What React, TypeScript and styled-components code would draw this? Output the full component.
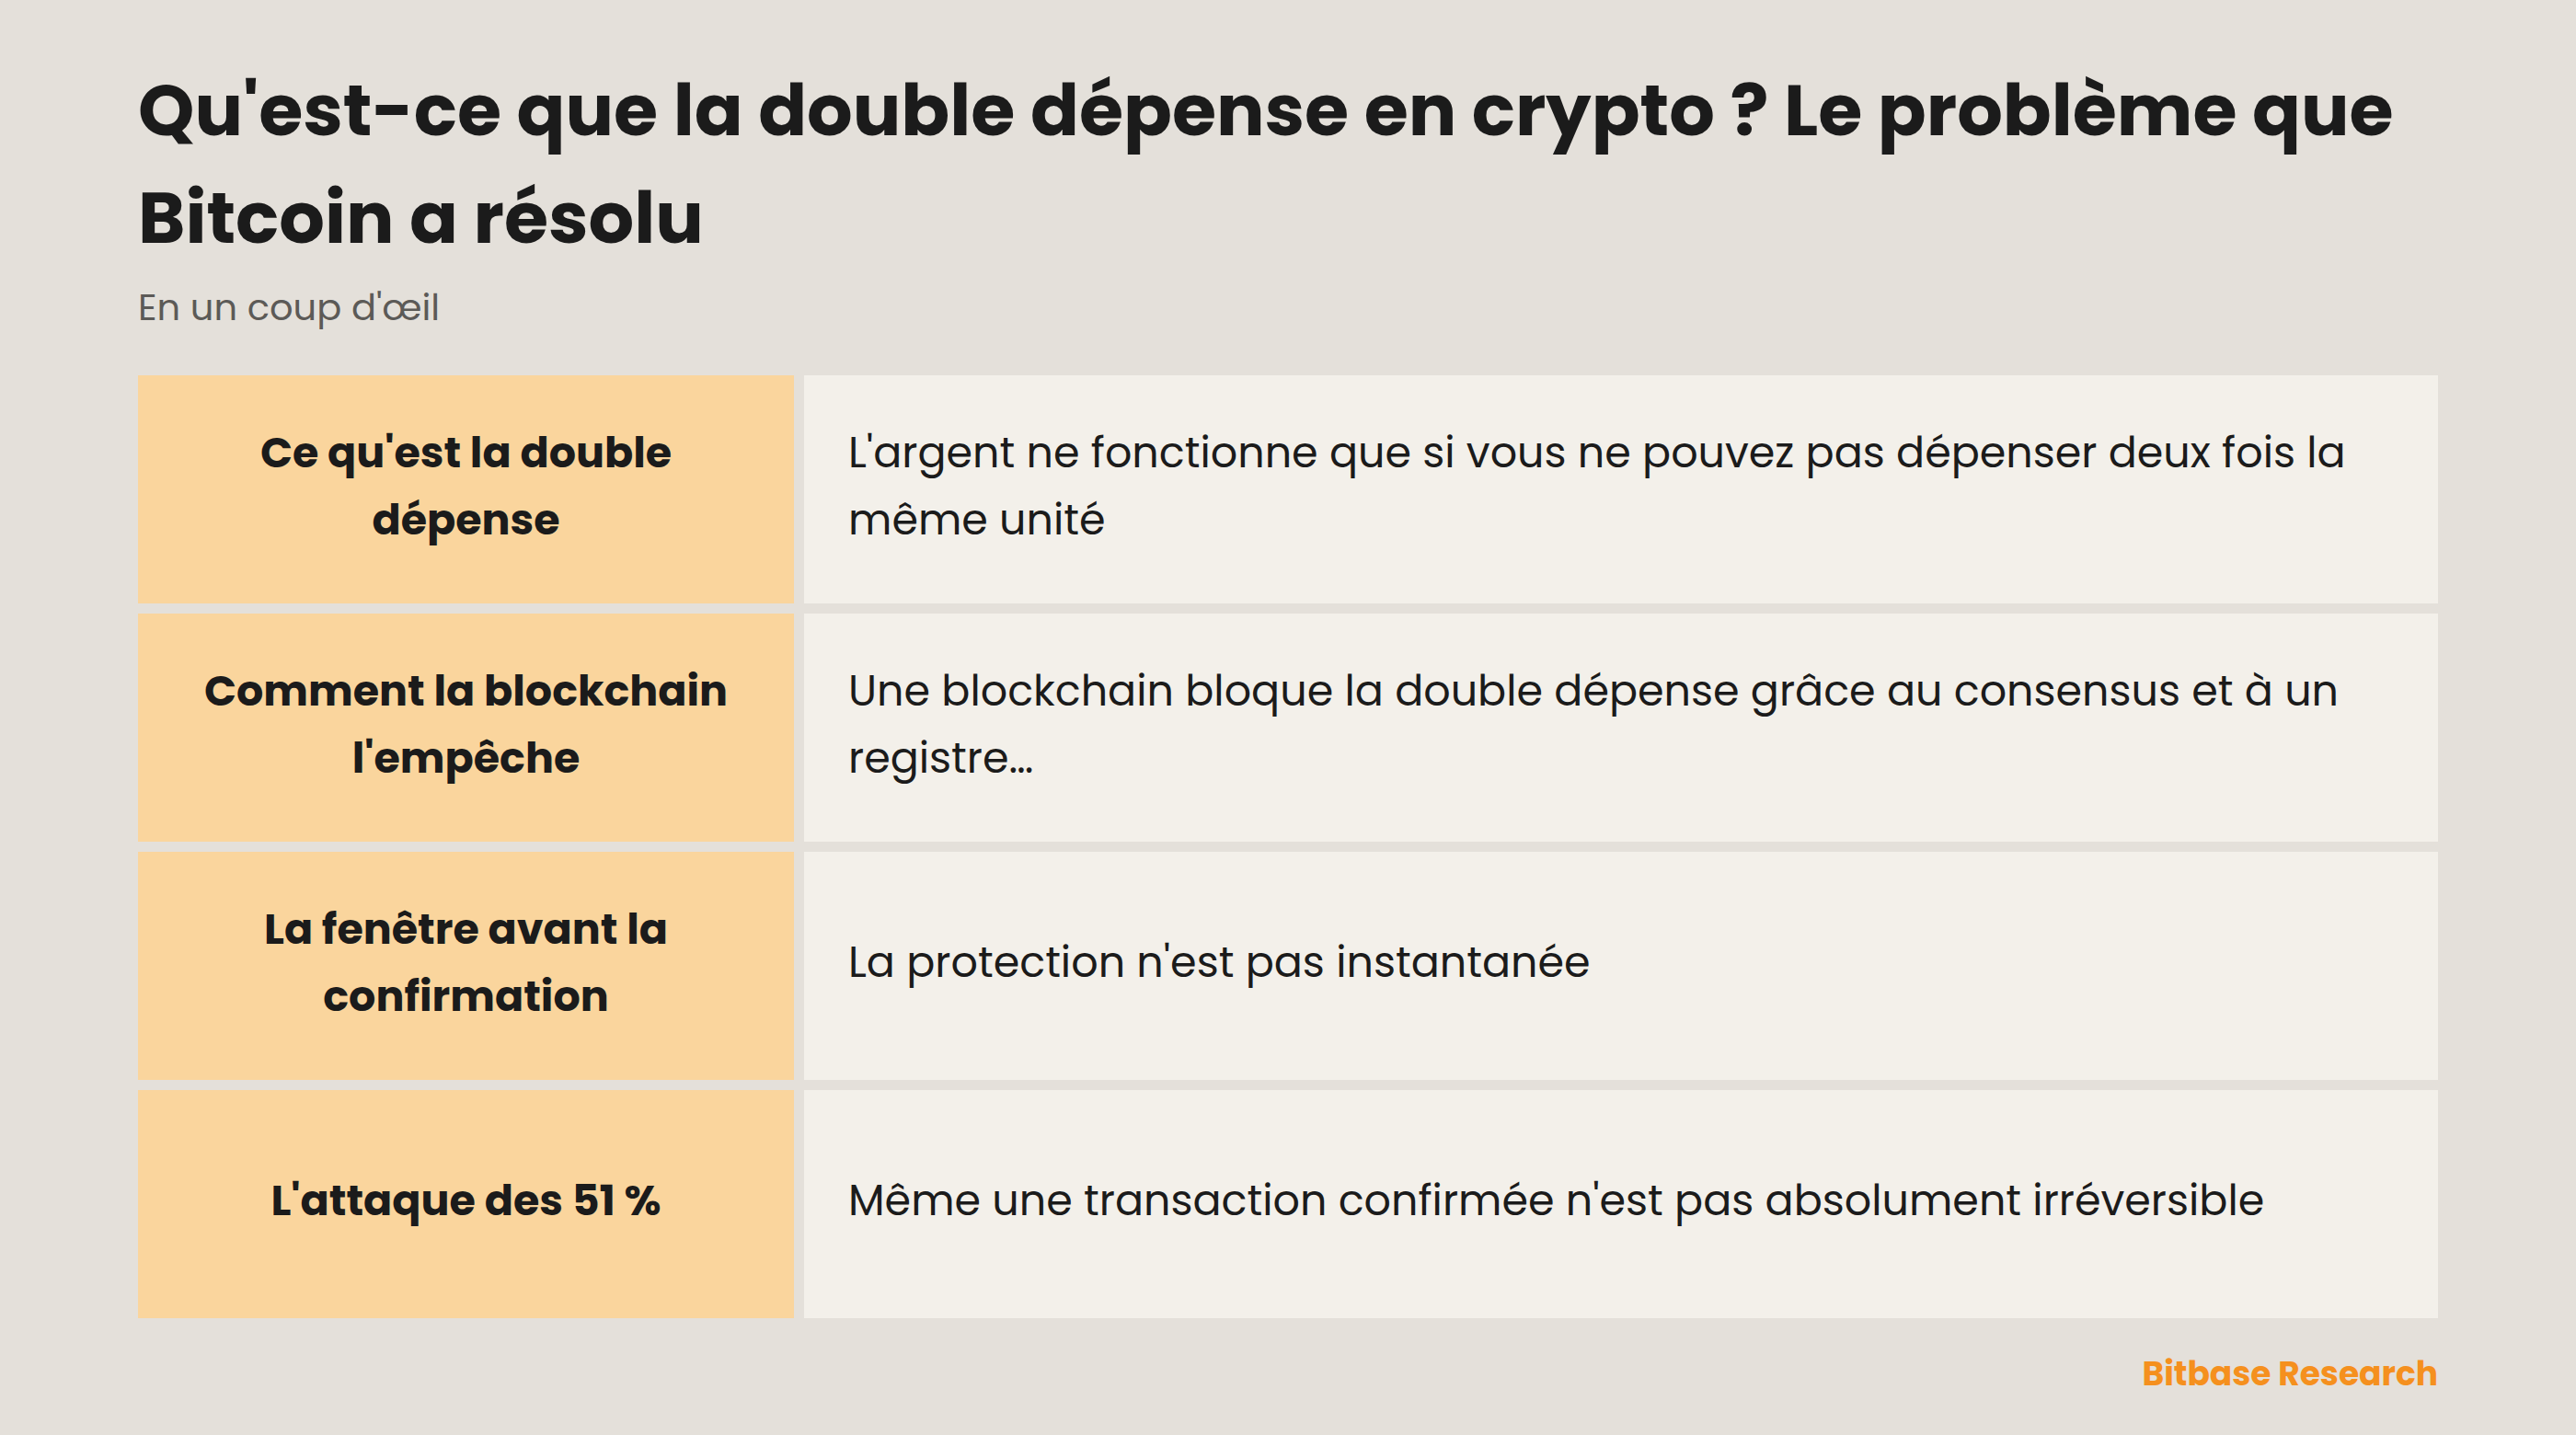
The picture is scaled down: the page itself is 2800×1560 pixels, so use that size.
import React from "react";
import styled, { createGlobalStyle } from "styled-components";

const Global = createGlobalStyle`
  html, body { margin: 0; padding: 0; background: #e4e0da; }
  body { font-family: "Poppins", Inter, "Noto Sans", sans-serif; color: #1b1b1b; }
`;

const Page = styled.main`
  box-sizing: border-box;
  width: 2800px;
  min-height: 1560px;
  padding: 61px 150px 0 150px;
  display: flex;
  flex-direction: column;
`;

const Title = styled.h1`
  margin: 0;
  font-size: 78px;
  line-height: 117px;
  font-weight: 700;
  color: #1b1b1b;
`;

const Subtitle = styled.p`
  margin: 9px 0 0 0;
  font-size: 40px;
  line-height: 60px;
  font-weight: 400;
  color: #5c5a57;
`;

const Table = styled.section`
  margin-top: 44px;
  display: grid;
  grid-template-columns: 713px 1fr;
  grid-auto-rows: 248px;
  gap: 11px 11px;
`;

const LabelCell = styled.div`
  box-sizing: border-box;
  background: #fad59d;
  display: flex;
  align-items: center;
  justify-content: center;
  text-align: center;
  padding: 0 48px 7px 48px;
  font-size: 46px;
  line-height: 73px;
  font-weight: 700;
`;

const ValueCell = styled.div`
  box-sizing: border-box;
  background: #f3f0ea;
  display: flex;
  align-items: center;
  padding: 0 48px 7px 48px;
  font-size: 46px;
  line-height: 73px;
  font-weight: 400;
`;

const Footer = styled.footer`
  margin-top: 34px;
  align-self: flex-end;
  font-size: 36px;
  line-height: 54px;
  font-weight: 700;
  color: #f5901e;
`;

const rows = [
  {
    label: "Ce qu'est la double dépense",
    value: "L'argent ne fonctionne que si vous ne pouvez pas dépenser deux fois la même unité",
  },
  {
    label: "Comment la blockchain l'empêche",
    value: "Une blockchain bloque la double dépense grâce au consensus et à un registre…",
  },
  {
    label: "La fenêtre avant la confirmation",
    value: "La protection n'est pas instantanée",
  },
  {
    label: "L'attaque des 51 %",
    value: "Même une transaction confirmée n'est pas absolument irréversible",
  },
];

export default function App() {
  return (
    <>
      <Global />
      <Page>
        <Title>Qu'est-ce que la double dépense en crypto ? Le problème que Bitcoin a résolu</Title>
        <Subtitle>En un coup d'œil</Subtitle>
        <Table>
          {rows.map((r) => (
            <React.Fragment key={r.label}>
              <LabelCell>{r.label}</LabelCell>
              <ValueCell>{r.value}</ValueCell>
            </React.Fragment>
          ))}
        </Table>
        <Footer>Bitbase Research</Footer>
      </Page>
    </>
  );
}
